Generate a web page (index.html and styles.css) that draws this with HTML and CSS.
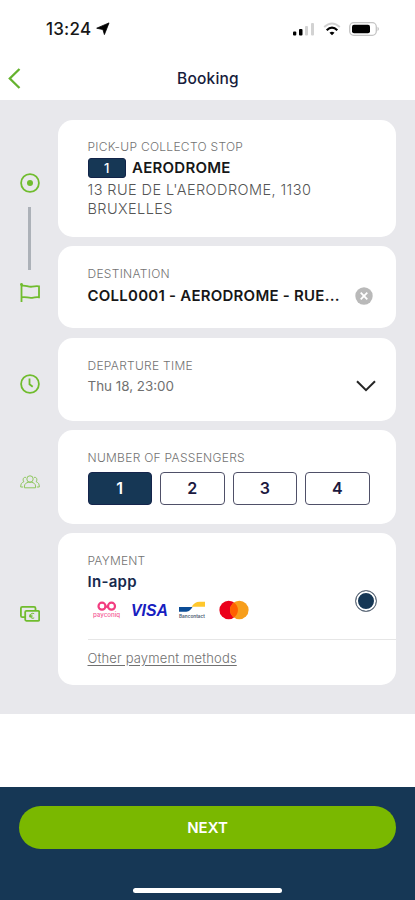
FILE: index.html
```html
<!DOCTYPE html>
<html lang="en">
<head>
<meta charset="utf-8">
<meta name="viewport" content="width=device-width, initial-scale=1">
<title>Booking</title>
<link rel="stylesheet" href="styles.css">
</head>
<body>
<div class="screen">
  <div class="status-bar">
    <div class="clock"><span class="clock-time">13:24</span>
      <svg width="14" height="14" viewBox="0 0 14 14"><path d="M13 .9 8.400 12.600 6.900 7.600 .7 6.200z" stroke="#000" stroke-width=".8" stroke-linejoin="round"/></svg>
    </div>
    <div class="indicators">
      <svg width="22" height="14" viewBox="0 0 22 14"><rect x="0" y="9.5" width="3.3" height="4" rx="1"/><rect x="6" y="7" width="3.5" height="6.5" rx="1"/><rect x="12" y="4" width="3" height="9.5" rx="1" fill="#d2d2d2"/><rect x="18" y="1" width="3" height="12.500" rx="1" fill="#d2d2d2"/></svg>
      <svg width="18" height="14" viewBox="0 0 18 14" fill="none"><path d="M1.200 5Q9-2 16.800 5" stroke="#d0d0d0" stroke-width="2"/><path d="M3.700 8.200Q9 3.200 14.300 8.200" stroke="#000" stroke-width="2.200"/><path d="M6.500 10.800Q9 8.800 11.500 10.800L9 13.300z" fill="#000"/></svg>
      <svg width="31" height="14" viewBox="0 0 31 14"><rect x=".7" y=".7" width="26.600" height="12.600" rx="4" fill="none" stroke="#c4c4c4" stroke-width="1.300"/><rect x="3" y="2.700" width="18" height="8.600" rx="2"/><path d="M28.500 4.800q3 2.200 0 4.400z" fill="#c4c4c4"/></svg>
    </div>
  </div>
  <header class="header">
    <svg class="back" width="13" height="21" viewBox="0 0 13 21"><path d="M11.500 1 1.800 10.500l9.700 9.500"/></svg>
    <h1>Booking</h1>
  </header>

  <main class="form">
    <section class="row row-pickup">
      <div class="marker">
        <svg width="20" height="20" viewBox="0 0 20 20"><circle cx="10" cy="10" r="8.900"/><circle class="solid" cx="10" cy="10" r="3"/></svg>
        <span class="connector"></span>
      </div>
      <div class="card">
        <div class="label stop-label">PICK-UP COLLECTO STOP</div>
        <div class="stop"><span class="stop-badge">1</span><strong class="stop-name">AERODROME</strong></div>
        <div class="address"><span class="address-street">13 RUE DE L'AERODROME, 1130</span><br>BRUXELLES</div>
      </div>
    </section>

    <section class="row row-destination">
      <div class="marker marker-flag">
        <svg width="20" height="20" viewBox="0 0 20 20"><path d="M1.500 1v18M1.500 2.800c4-1.200 6.500 1.500 10.500.9 2.500-.5 4.500-.7 7-.4v11c-3-.3-5 .1-7 .5-4 .5-6.500-1.600-10.500-.4"/><circle class="solid" cx="1.500" cy="1.500" r="1.400"/></svg>
      </div>
      <div class="card">
        <div class="label destination-label">DESTINATION</div>
        <div class="destination"><strong>COLL0001 - AERODROME - RUE...</strong>
          <svg width="18" height="18" viewBox="0 0 18 18"><circle cx="9" cy="9" r="8.700" fill="#b9b9b9"/><path d="m5.700 5.700 6.600 6.600m0-6.600-6.600 6.600" stroke="#fff" stroke-width="1.800"/></svg>
        </div>
      </div>
    </section>

    <section class="row row-departure">
      <div class="marker">
        <svg width="20" height="20" viewBox="0 0 20 20"><circle cx="10" cy="10" r="8.900"/><path d="M9.500 4.500v5.800l3.200 2.500"/></svg>
      </div>
      <div class="card">
        <div class="label departure-label">DEPARTURE TIME</div>
        <div class="departure"><span>Thu 18, 23:00</span>
          <svg width="20" height="12" viewBox="0 0 20 12"><path d="m1 1.200 9 9 9-9" fill="none" stroke="#252525" stroke-width="2"/></svg>
        </div>
      </div>
    </section>

    <section class="row row-passengers">
      <div class="marker">
        <svg class="people" width="20" height="14" viewBox="0 0 20 14"><circle cx="10" cy="4" r="3.200"/><path d="M4.500 12.800V11c0-2.200 1.800-3.200 3.800-3.700h3.400c2 .5 3.800 1.500 3.800 3.700v1.800z"/><path d="M6 2.500C3.500 1.600 2.300 4.500 3.800 6.800 1.800 7.400.7 8.700.7 12h2.500M14 2.500c2.500-.9 3.700 2 2.200 4.300 2 .6 3.100 1.900 3.100 5.200h-2.500"/></svg>
      </div>
      <div class="card">
        <div class="label passengers-label">NUMBER OF PASSENGERS</div>
        <div class="counts"><span class="count selected">1</span><span class="count">2</span><span class="count">3</span><span class="count">4</span></div>
      </div>
    </section>

    <section class="row row-payment">
      <div class="marker">
        <svg width="20" height="16" viewBox="0 0 20 16"><rect x="5.200" y="4.800" width="14" height="10" rx="1.200"/><path d="M15.500 4.500V2.300q0-1.400-1.400-1.400H2.300Q.9.900.9 2.300v7.500q0 1.400 1.400 1.400H5"/><path class="thin" d="M14.200 7.700c-3-1.200-4.500.8-3.700 3 .6 1.700 2.300 1.900 3.700 1.200M9 9.200h3.500M9 10.700h3.500"/></svg>
      </div>
      <div class="card">
        <div class="method">
          <div>
            <div class="label payment-label">PAYMENT</div>
            <strong class="method-name">In-app</strong>
            <div class="brands">
              <svg class="payconiq" width="28" height="19" viewBox="0 0 28 19"><g fill="none" stroke="#f23d80" stroke-width="2.200"><circle cx="9" cy="5.200" r="3.500"/><circle cx="18.500" cy="5.200" r="3.500"/><path d="M12 6.300q1.700-1.500 3.500 0"/></g><text x="0" y="15.500" textLength="27" lengthAdjust="spacingAndGlyphs">payconiq</text></svg>
              <svg class="visa" width="39" height="18" viewBox="0 0 39 18"><text x="1" y="15" textLength="37" lengthAdjust="spacingAndGlyphs">VISA</text></svg>
              <svg class="bancontact" width="28" height="19" viewBox="0 0 28 19"><path fill="#0b4c96" d="M1 6h13.500c-2.300 3.500-4 4.800-7.500 4.800H1z"/><path fill="#ffc72c" d="M13.500 5.800c2.500-3.500 4.500-5 8-5H27v5z"/><text x="1" y="16.500" textLength="26" lengthAdjust="spacingAndGlyphs">Bancontact</text></svg>
              <svg width="30" height="20" viewBox="0 0 30 20"><circle cx="9.700" cy="10" r="9.300" fill="#eb001b"/><circle cx="20.300" cy="10" r="9.300" fill="#f79e1b"/><path d="M15 2.400a9.300 9.300 0 0 1 0 15.200 9.300 9.300 0 0 1 0-15.200" fill="#ff5f00"/></svg>
            </div>
          </div>
          <span class="radio"></span>
        </div>
        <div class="other"><span>Other payment methods</span></div>
      </div>
    </section>
  </main>

  <footer class="footer">
    <div class="next">NEXT</div>
    <div class="home-indicator"></div>
  </footer>
</div>
</body>
</html>
```
FILE: styles.css
```css
* { box-sizing: border-box; }
body { margin: 0; background: #fff; font-family: Inter, "Liberation Sans", sans-serif; }
svg { display: block; flex: none; }
.screen { display: flex; flex-direction: column; height: 900px; overflow: hidden; }

.status-bar { display: flex; justify-content: space-between; height: 57px; padding: 0 35px 0 46px; align-items: center; flex: none; }
.clock { display: flex; align-items: center; gap: 4px; }
.clock-time { font-size: 17px; font-weight: 500; letter-spacing: .2px; color: #171717; width: 46px; white-space: nowrap; }
.indicators { display: flex; align-items: center; gap: 8px; }

.header { display: flex; align-items: center; height: 43px; padding-left: 8px; flex: none; }
.back path { fill: none; stroke: #65b22e; stroke-width: 2.300; }
.header h1 { flex: 1; margin: 0 20px 0 0; text-align: center; font-size: 15.500px; font-weight: 500; letter-spacing: .2px; color: #171c3c; }

.form { display: flex; flex-direction: column; gap: 9.500px; height: 614px; padding: 19.500px 19px 29px 0; background: #e8e8ec; flex: none; }
.row { display: grid; grid-template-columns: 58px 1fr; }
.row-pickup { height: 117.500px; }
.row-destination { height: 82px; }
.row-departure { height: 83px; }
.row-passengers { height: 93.500px; }
.row-payment { height: 152px; }
.marker { position: relative; display: flex; align-items: center; justify-content: center; padding: 10px 0 0 1px; }
.marker-flag { padding-top: 12px; }
.marker svg { fill: none; stroke: #70bc2e; stroke-width: 1.800; }
.marker .solid { fill: #70bc2e; stroke: none; }
.marker .thin { stroke-width: 1; }
.marker .people { stroke-width: 1; opacity: .75; }
.connector { position: absolute; top: 87px; left: 28px; width: 2.500px; height: 63px; background: #acb1b8; }

.card { padding: 0 0 0 29.500px; border-radius: 15px; background: #fff; min-width: 0; }
.label { font-size: 12px; line-height: 16px; letter-spacing: .29px; color: #737373; font-weight: 300; white-space: nowrap; padding-top: 20px; }
.stop-label { padding-top: 19px; }
.payment-label { letter-spacing: .2px; }

.stop { display: flex; align-items: center; height: 22px; margin-top: 2px; gap: 6px; }
.stop-badge { width: 38.500px; height: 20px; border: 1px solid #122449; border-radius: 3px; background: #163755; color: #fff; font-size: 13px; line-height: 18px; font-weight: 500; text-align: center; }
.stop-name { font-size: 15px; font-weight: 600; letter-spacing: .25px; color: #171717; }
.address { margin-top: 2.500px; font-size: 14.500px; line-height: 18.500px; letter-spacing: .42px; font-weight: 300; color: #555; }

.destination { display: flex; align-items: center; justify-content: space-between; height: 20px; margin-top: 3.500px; padding-right: 23px; }
.destination strong { font-size: 15px; font-weight: 600; letter-spacing: .24px; color: #171717; white-space: nowrap; }

.departure { display: flex; align-items: center; justify-content: space-between; height: 20px; margin-top: 2px; padding-right: 20px; font-size: 13.400px; font-weight: 400; color: #707070; }

.counts { display: flex; gap: 8px; margin-top: 5.500px; }
.count { width: 64.500px; height: 33px; border: 1.500px solid #4f5068; border-radius: 4px; display: flex; align-items: center; justify-content: center; font-size: 16px; font-weight: 600; color: #1c193f; }
.count.selected { background: #163755; border-color: #15254c; color: #fff; }

.method { display: flex; height: 105.500px; justify-content: space-between; padding-right: 19px; }
.method-name { display: block; font-size: 15px; line-height: 20px; margin-top: 2.500px; font-weight: 600; letter-spacing: .3px; color: #17294c; }
.brands { display: flex; align-items: center; height: 20px; margin: 8.500px 0 0 5px; }
.brands svg { overflow: visible; }
.visa { margin-left: 9px; }
.bancontact { margin: 0 13px 0 9px; }
.payconiq text { font: 500 6px Inter, sans-serif; fill: #f45a95; }
.visa text { font: italic 700 17px "Liberation Sans", sans-serif; fill: #1720c0; }
.bancontact text { font: 600 5px Inter, sans-serif; fill: #4b5b72; }
.radio { width: 22px; height: 22px; margin-top: 56.500px; border: 1px solid #6c7480; border-radius: 50%; background: #163755; box-shadow: inset 0 0 0 2px #fff; }
.other { border-top: 1px solid #e6e6e6; padding-top: 8px; font-size: 13px; line-height: 20px; letter-spacing: .15px; font-weight: 300; color: #707070; }
.other span { text-decoration: underline; text-underline-offset: 2px; }

.footer { display: flex; flex-direction: column; align-items: center; height: 113.500px; margin-top: auto; padding-top: 19.500px; background: #163755; flex: none; }
.next { width: 377px; height: 43px; border-radius: 22px; background: #7ab800; color: #fff; font-size: 15px; font-weight: 600; line-height: 43px; text-align: center; }
.home-indicator { width: 149px; height: 5px; margin-top: 39px; border-radius: 3px; background: #fff; }
```
